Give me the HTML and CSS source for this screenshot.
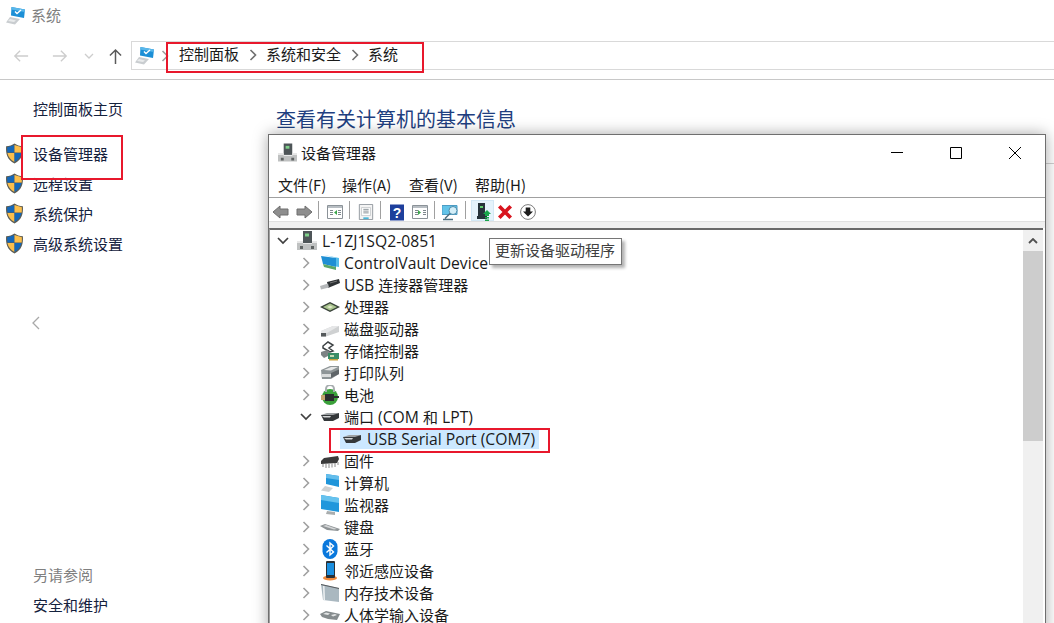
FILE: index.html
```html
<!DOCTYPE html>
<html lang="zh-CN">

<head>
    <meta charset="UTF-8">
    <title>系统</title>
    <link rel="stylesheet" href="styles.css">
</head>

<body>
    <svg class="defs" width="0" height="0">
        <defs>
            <symbol id="pc" viewBox="0 0 20 20">
                <path d="M5.500 1 19 3.500 18 12 5 9.500z" fill="#1c8fd6"/>
                <path d="M5.500 1 19 3.500 18.700 6 5.200 3.500z" fill="#59b7ea"/>
                <path d="M9 5.500 11 7.500 15 4" fill="none" stroke="#fff" stroke-width="1.400"/>
                <path d="M4 11 14 13 9 18.500 0 16.500z" fill="#c9cdd0"/>
                <path d="M4 13 10 14.500 8 16 2 15z" fill="#e9ebec"/>
            </symbol>
            <symbol id="shield" viewBox="0 0 18 20">
                <path d="M9 .5C7 2 4 3 1 3c-.5 7 1 13 8 16.500C16 16 17.500 10 17 3c-3 0-6-1-8-2.500z" fill="#5c5c52"/>
                <path d="M9 2 2 4c0 2 0 4 .3 5H9z" fill="#1467b8"/>
                <path d="M9 2v7h6.800c.3-1 .2-3 .2-5z" fill="#fbbf4c"/>
                <path d="M2.300 9.500H9V18C5 16 3 13 2.300 9.500z" fill="#fbbf4c"/>
                <path d="M9 9.500h6.700C15 13 13 16 9 18z" fill="#1467b8"/>
            </symbol>
            <symbol id="host" viewBox="0 0 20 20">
                <path d="M6 0h9v12H6z" fill="#4e5558"/>
                <path d="M8 2.500h4v3H8z" fill="#7fd08a"/>
                <path d="M0 10h6v3h9v-3h5v9H0z" fill="#bfc1c1"/>
                <path d="M0 10h6v3h9v-3h5v2H0z" fill="#e7e7e7"/>
                <path d="M3 15h3v3H3zM14 15h3v3h-3z" fill="#5f6363"/>
            </symbol>
            <symbol id="card" viewBox="0 0 20 20">
                <path d="M1 3 16 5v9L3 11z" fill="#1f8fd4"/>
                <path d="M4 2 19 5v9l-3-.500V5z" fill="#55bdea"/>
                <path d="M3 11 16 14v3L4 14z" fill="#5ba867"/>
            </symbol>
            <symbol id="usb" viewBox="0 0 20 20">
                <path d="M7 7 19 4l1 4-12 5z" fill="#2e3234"/>
                <path d="M0 11 8 8.500 9 12.500l-8 2z" fill="#b5b8ba"/>
                <path d="M10 8 17 6" stroke="#777" fill="none"/>
            </symbol>
            <symbol id="cpu" viewBox="0 0 20 20">
                <path d="M0 10 10 5l10 5-10 5z" fill="#39433a"/>
                <path d="M3 10 10 6.500 17 10l-7 3.500z" fill="#a9c48e"/>
                <path d="M7 10 10 8.500 13 10l-3 1.500z" fill="#dfe7c8"/>
            </symbol>
            <symbol id="disk" viewBox="0 0 20 20">
                <path d="M1 12 13 7h6v6L6 17.500H1z" fill="#cfd1d2"/>
                <path d="M1 14h5v3.500H1z" fill="#55595b"/>
                <path d="M1 12 13 7h6L7 14H1z" fill="#e6e7e8"/>
            </symbol>
            <symbol id="storage" viewBox="0 0 20 20">
                <path d="M3 5 8 1l5 3-4 3 4 3-3 1-7-4z" fill="none" stroke="#3d4244" stroke-width="1.500"/>
                <path d="M1 11 7 9l3 2v3l-6 3-3-3z" fill="#7d8385"/>
                <path d="M8 12h11v6H8z" fill="#3a8c66"/>
                <path d="M10 14h4v2h-4z" fill="#c7d8b2"/>
                <path d="M9 18h9v1.500H9z" fill="#c8a03c"/>
            </symbol>
            <symbol id="printer" viewBox="0 0 20 20">
                <path d="M1 7 10 3h9v8l-8 5H2z" fill="#8e9597"/>
                <path d="M4 7 11 4h7l-7 3.500z" fill="#e5e6e6"/>
                <path d="M2 11h9v3H2z" fill="#dadcdc"/>
                <path d="M11 10 19 6.500V11l-8 4z" fill="#5f6568"/>
            </symbol>
            <symbol id="battery" viewBox="0 0 20 20">
                <circle cx="10" cy="12" r="8" fill="#3aa03a"/>
                <path d="M5 4a5 5 0 0 1 10 0v3h-2V4a3 3 0 0 0-6 0v3H5z" fill="#a7adaf"/>
                <path d="M5 9h9v7H5z" fill="#2a2d2e"/>
                <path d="M1 10h4v5H1z" fill="#c5a36e"/>
                <path d="M14 11h5v2h-5z" fill="#2a2d2e"/>
            </symbol>
            <symbol id="port" viewBox="0 0 20 20">
                <path d="M1 8 7 6h12l-6 3H2z" fill="#9ea2a4"/>
                <path d="M1 8h12l6-2v5l-6 3H4z" fill="#34383a"/>
                <path d="M2 9h9l-1 1.500H4z" fill="#d6d8d9"/>
            </symbol>
            <symbol id="chip" viewBox="0 0 20 20">
                <path d="M1 10 4 7l14-2 1 3-2 4-16 1z" fill="#3b3b3b"/>
                <path d="M3 13v3M6 13v4M9 13v4M12 12.500v4M15 12v4M18 11v3" stroke="#8a8a8a" fill="none"/>
            </symbol>
            <symbol id="computer" viewBox="0 0 20 20">
                <path d="M6 1 19 3v11L6 11z" fill="#1f95da"/>
                <path d="M6 1 19 3v4L6 5z" fill="#63bdeb"/>
                <path d="M5 13 13 15l-4 4-8-1.500z" fill="#ced1d2"/>
            </symbol>
            <symbol id="monitor" viewBox="0 0 20 20">
                <path d="M1 0 19 3v14L1 14z" fill="#2097dc"/>
                <path d="M1 0 19 3v5L1 5z" fill="#66c2ee"/>
                <path d="M7 16 15 17v3l-9-1z" fill="#a9adae"/>
            </symbol>
            <symbol id="keyboard" viewBox="0 0 20 20">
                <path d="M0 9 5 7l15 5-2 2-11-1z" fill="#8f9496"/>
                <path d="M3 9 6 8l11 4-3 .500z" fill="#d4d6d7"/>
            </symbol>
            <symbol id="bluetooth" viewBox="0 0 20 20">
                <rect x="2.500" y="0" width="15" height="20" rx="7.500" fill="#0a78dc"/>
                <path d="M6.500 6.500 13.500 13 10 16V4l3.500 3-7 6.500" fill="none" stroke="#fff" stroke-width="1.400"/>
            </symbol>
            <symbol id="phone" viewBox="0 0 20 20">
                <ellipse cx="10" cy="17" rx="7" ry="2.500" fill="#f08a3c"/>
                <rect x="6" y="0" width="9" height="17" rx="1" fill="#2b3136"/>
                <rect x="7" y="2" width="7" height="12" fill="#1a8fe0"/>
            </symbol>
            <symbol id="memory" viewBox="0 0 20 20">
                <path d="M1 1 19 5v14L3 17z" fill="#aab8c0"/>
                <path d="M1 1 19 5v1L1 2z" fill="#55595b"/>
                <path d="M3 3h1.500l.500 14H3.500z" fill="#eef1f2"/>
            </symbol>
            <symbol id="hid" viewBox="0 0 20 20">
                <path d="M0 9 6 6l14 3-3 6-9-1-6-2z" fill="#858b8d"/>
                <path d="M3 9 6 7.500l4 1-2 1.500zM11 10l4-1 2 1-4 1.500z" fill="#e2e4e4"/>
            </symbol>
            <symbol id="chev" viewBox="0 0 10 14">
                <path d="M2.500 2 7.500 7 2.500 12" fill="none" stroke="currentColor" stroke-width="1.600"/>
            </symbol>
            <symbol id="chev-down" viewBox="0 0 14 10">
                <path d="M2 2 7 7 12 2" fill="none" stroke="#404040" stroke-width="1.700"/>
            </symbol>
            <symbol id="pane" viewBox="0 0 16 16">
                <path d="M.5 1.500h15v13H.5z" fill="#fff" stroke="#8b9298"/>
                <path d="M1 2h14v2H1z" fill="#b8bec3"/>
                <path d="M3 6h3v1H3zM3 8h3v1H3zM3 10h3v1H3zM11 6h3v1h-3zM11 8h3v1h-3zM11 10h3v1h-3z" fill="#7d868c"/>
            </symbol>
        </defs>
    </svg>

    <div class="title-row">
        <svg class="title-icon"><use href="#pc"/></svg>
        <span>系统</span>
    </div>

    <div class="nav-row">
        <svg class="nav-arrow" viewBox="0 0 18 14"><path d="M17 7H2M8 1 2 7l6 6" fill="none" stroke="#cdcdcd" stroke-width="1.500"/></svg>
        <svg class="nav-arrow nav-forward" viewBox="0 0 18 14"><path d="M1 7h15M10 1l6 6-6 6" fill="none" stroke="#cdcdcd" stroke-width="1.500"/></svg>
        <svg class="nav-drop" viewBox="0 0 10 6"><path d="M1 1 5 5 9 1" fill="none" stroke="#cdcdcd" stroke-width="1.300"/></svg>
        <svg class="nav-up" viewBox="0 0 14 18"><path d="M7 17V2M1 8l6-6 6 6" fill="none" stroke="#5a5a5a" stroke-width="1.600"/></svg>
        <div class="address">
            <svg class="address-icon"><use href="#pc"/></svg>
            <svg class="crumb-sep first"><use href="#chev"/></svg>
            <span>控制面板</span>
            <svg class="crumb-sep"><use href="#chev"/></svg>
            <span>系统和安全</span>
            <svg class="crumb-sep"><use href="#chev"/></svg>
            <span>系统</span>
        </div>
    </div>

    <div class="page">
        <div class="sidebar">
            <div class="side-home">控制面板主页</div>
            <div class="side-link"><svg class="shield"><use href="#shield"/></svg>设备管理器</div>
            <div class="side-link"><svg class="shield"><use href="#shield"/></svg>远程设置</div>
            <div class="side-link"><svg class="shield"><use href="#shield"/></svg>系统保护</div>
            <div class="side-link"><svg class="shield"><use href="#shield"/></svg>高级系统设置</div>
            <svg class="side-collapse" viewBox="0 0 8 14"><path d="M7 1 1 7l6 6" fill="none" stroke="#a8a8a8" stroke-width="1.300"/></svg>
            <div class="side-see">另请参阅</div>
            <div class="side-home">安全和维护</div>
        </div>
        <h1 class="heading">查看有关计算机的基本信息</h1>
    </div>

    <div class="page-edge"></div>

    <div class="window">
        <div class="win-title">
            <svg class="win-icon"><use href="#host"/></svg>
            <span class="win-name">设备管理器</span>
            <div class="win-controls">
                <div class="win-btn"><svg viewBox="0 0 12 12"><path d="M0 5.500h12" stroke="#000"/></svg></div>
                <div class="win-btn"><svg viewBox="0 0 12 12"><path d="M.5.500h11v11H.5z" fill="none" stroke="#000"/></svg></div>
                <div class="win-btn"><svg viewBox="0 0 12 12"><path d="M0 0 12 12M12 0 0 12" stroke="#000"/></svg></div>
            </div>
        </div>
        <div class="menu">
            <span>文件(F)</span>
            <span>操作(A)</span>
            <span>查看(V)</span>
            <span>帮助(H)</span>
        </div>
        <div class="toolbar">
            <div class="tool"><svg viewBox="0 0 16 14"><path d="M0 7 7 1v3h8v6H7v3z" fill="#8e8e8e" stroke="#6e6e6e"/></svg></div>
            <div class="tool"><svg viewBox="0 0 16 14"><path d="M16 7 9 1v3H1v6h8v3z" fill="#8e8e8e" stroke="#6e6e6e"/></svg></div>
            <div class="tool-sep"></div>
            <div class="tool"><svg viewBox="0 0 16 16"><use href="#pane"/><path d="M10 6 7 8.500l3 2.500z" fill="#3aa54a"/></svg></div>
            <div class="tool-sep"></div>
            <div class="tool"><svg viewBox="0 0 16 18"><path d="M.5.500h15v17H.5z" fill="#f4f4f4" stroke="#8b9298"/><path d="M3 4h10v9H3z" fill="#fff" stroke="#a8adb1" stroke-width=".6"/><path d="M5 6h6M5 8h6M5 10h6" stroke="#7d868c"/><path d="M5 15h6v2H5z" fill="#49b6d8"/></svg></div>
            <div class="tool-sep"></div>
            <div class="tool"><svg viewBox="0 0 14 16" class="tool-help"><path d="M0 0h14v16H0z" fill="#1e3f9c"/><text x="7" y="13" class="help-mark">?</text></svg></div>
            <div class="tool"><svg viewBox="0 0 16 16"><use href="#pane"/><path d="M6 6l3 2.500L6 11z" fill="#3aa54a"/></svg></div>
            <div class="tool-sep"></div>
            <div class="tool"><svg viewBox="0 0 18 16" class="tool-wide"><path d="M0 1h15v9H0z" fill="#62c3e8" stroke="#4c9cc4"/><circle cx="11" cy="6" r="4" fill="#d3eef8" stroke="#4c8cab"/><path d="M8 9 3 14M1 15h10" stroke="#4d6f80" stroke-width="1.500"/></svg></div>
            <div class="tool-sep"></div>
            <div class="tool tool-on"><svg viewBox="0 0 14 18" class="tool-tall"><path d="M1 0h7v13H1zM0 13h10v3H0z" fill="#26333a"/><path d="M3 3h3v2H3z" fill="#60cf70"/><path d="M10 7l4 4h-2v2H8v-2H6z" fill="#18a54a"/><path d="M8 14h4v1.500H8zM8 16.500h4V18H8z" fill="#18a54a"/></svg></div>
            <div class="tool"><svg viewBox="0 0 14 14"><path d="M2 2 12 12M12 2 2 12" stroke="#d8141e" stroke-width="3.200"/></svg></div>
            <div class="tool"><svg viewBox="0 0 16 16"><circle cx="8" cy="8" r="7.400" fill="#fff" stroke="#7c7c7c"/><path d="M5.700 3.500h4.600v4H13L8 12.500 3 7.500h2.700z" fill="#1c1c1c"/></svg></div>
        </div>
        <div class="band"></div>
        <div class="tree-wrap">
            <div class="tree">
                <div class="row root"><svg class="toggle-down"><use href="#chev-down"/></svg><svg class="row-icon"><use href="#host"/></svg><span class="lat">L-1ZJ1SQ2-0851</span></div>
                <div class="row"><svg class="toggle"><use href="#chev"/></svg><svg class="row-icon"><use href="#card"/></svg><span class="lat">ControlVault Device</span></div>
                <div class="row"><svg class="toggle"><use href="#chev"/></svg><svg class="row-icon"><use href="#usb"/></svg><span><span class="lat">USB </span>连接器管理器</span></div>
                <div class="row"><svg class="toggle"><use href="#chev"/></svg><svg class="row-icon"><use href="#cpu"/></svg><span class="cn">处理器</span></div>
                <div class="row"><svg class="toggle"><use href="#chev"/></svg><svg class="row-icon"><use href="#disk"/></svg><span class="cn">磁盘驱动器</span></div>
                <div class="row"><svg class="toggle"><use href="#chev"/></svg><svg class="row-icon"><use href="#storage"/></svg><span class="cn">存储控制器</span></div>
                <div class="row"><svg class="toggle"><use href="#chev"/></svg><svg class="row-icon"><use href="#printer"/></svg><span class="cn">打印队列</span></div>
                <div class="row"><svg class="toggle"><use href="#chev"/></svg><svg class="row-icon"><use href="#battery"/></svg><span class="cn">电池</span></div>
                <div class="row"><svg class="toggle-down"><use href="#chev-down"/></svg><svg class="row-icon"><use href="#port"/></svg><span>端口<span class="lat"> (COM </span>和<span class="lat"> LPT)</span></span></div>
                <div class="row child"><div class="selected"><svg class="row-icon"><use href="#port"/></svg><span class="lat">USB Serial Port (COM7)</span></div></div>
                <div class="row"><svg class="toggle"><use href="#chev"/></svg><svg class="row-icon"><use href="#chip"/></svg><span class="cn">固件</span></div>
                <div class="row"><svg class="toggle"><use href="#chev"/></svg><svg class="row-icon"><use href="#computer"/></svg><span class="cn">计算机</span></div>
                <div class="row"><svg class="toggle"><use href="#chev"/></svg><svg class="row-icon"><use href="#monitor"/></svg><span class="cn">监视器</span></div>
                <div class="row"><svg class="toggle"><use href="#chev"/></svg><svg class="row-icon"><use href="#keyboard"/></svg><span class="cn">键盘</span></div>
                <div class="row"><svg class="toggle"><use href="#chev"/></svg><svg class="row-icon"><use href="#bluetooth"/></svg><span class="cn">蓝牙</span></div>
                <div class="row"><svg class="toggle"><use href="#chev"/></svg><svg class="row-icon"><use href="#phone"/></svg><span class="cn">邻近感应设备</span></div>
                <div class="row"><svg class="toggle"><use href="#chev"/></svg><svg class="row-icon"><use href="#memory"/></svg><span class="cn">内存技术设备</span></div>
                <div class="row"><svg class="toggle"><use href="#chev"/></svg><svg class="row-icon"><use href="#hid"/></svg><span class="cn">人体学输入设备</span></div>
            </div>
            <div class="scrollbar">
                <div class="scroll-up"><svg viewBox="0 0 10 6"><path d="M1 5 5 1l4 4" fill="none" stroke="#505050" stroke-width="1.800"/></svg></div>
                <div class="scroll-thumb"></div>
            </div>
        </div>
    </div>

    <div class="tooltip">更新设备驱动程序</div>

    <div class="mark mark-crumbs"></div>
    <div class="mark mark-side"></div>
    <div class="mark mark-port"></div>
</body>

</html>
```

FILE: styles.css
```css
html, body {
    margin: 0;
    height: 623px;
    overflow: hidden;
}

body {
    position: relative;
    background-color: #fff;
    font-family: 'Noto Sans CJK SC', 'Open Sans', sans-serif;
    font-size: 15px;
    color: #1a1a1a;
}

.defs {
    position: absolute;
}

.title-row {
    display: flex;
    align-items: center;
    height: 32px;
    padding-left: 6px;
    color: #7f7f7f;
    font-size: 15px;
}

.title-row span {
    margin-bottom: 4px;
}

.title-icon {
    width: 20px;
    height: 20px;
    margin-right: 5px;
}

.nav-row {
    display: flex;
    align-items: flex-start;
    height: 48px;
    padding-top: 9px;
    box-sizing: border-box;
    border-bottom: 1px solid #c8c8c8;
}

.nav-arrow {
    width: 16px;
    height: 14px;
    margin: 8px 0 0 13px;
}

.nav-forward {
    margin-left: 23px;
}

.nav-drop {
    width: 10px;
    height: 6px;
    margin: 12px 0 0 16px;
}

.nav-up {
    width: 13px;
    height: 17px;
    margin: 7px 0 0 15px;
}

.address {
    display: flex;
    align-items: center;
    height: 27px;
    margin-left: 9px;
    padding-left: 3px;
    flex: 1;
    border: 1px solid #d9d9d9;
    border-right: none;
    color: #1a1a1a;
}

.address span {
    margin-bottom: 4px;
}

.address-icon {
    width: 20px;
    height: 20px;
    margin-right: 5px;
}

.crumb-sep {
    width: 10px;
    height: 14px;
    margin: 0 8.5px 2px;
    color: #707070;
}

.crumb-sep.first {
    margin: 0 9px 0 0;
    color: #a0a0a0;
}

.page {
    display: flex;
}

.sidebar {
    width: 276px;
    flex: none;
    color: #14213d;
    height: 540px;
}

.side-home {
    height: 30px;
    line-height: 30px;
    padding-left: 33px;
    margin-top: 14px;
}

.side-link {
    display: flex;
    align-items: center;
    height: 30px;
    padding-left: 5px;
}

.side-home + .side-link {
    margin-top: 14px;
}

.shield {
    width: 19px;
    height: 21px;
    margin-right: 9px;
}

.side-collapse {
    display: block;
    width: 8px;
    height: 14px;
    margin: 58px 0 0 32px;
}

.side-see {
    height: 30px;
    line-height: 30px;
    padding-left: 33px;
    margin-top: 230px;
    color: #808080;
}

.side-see + .side-home {
    margin-top: 0;
}

.heading {
    margin: 22px 0 0;
    font-size: 20px;
    font-weight: 400;
    line-height: 34px;
    color: #1f3f80;
}

.page-edge {
    position: absolute;
    left: 1046px;
    top: 163px;
    width: 8px;
    height: 1px;
    background-color: #d0d0d0;
}

.window {
    position: absolute;
    left: 268px;
    top: 134px;
    width: 778px;
    height: 500px;
    box-sizing: border-box;
    background-color: #fff;
    border: 1px solid #6f6f6f;
    box-shadow: 0 0 14px rgba(0, 0, 0, 0.35);
}

.win-title {
    display: flex;
    align-items: center;
    height: 36px;
}

.win-icon {
    width: 19px;
    height: 20px;
    margin: 0 4px 0 9px;
}

.win-name {
    margin-bottom: 2px;
}

.win-controls {
    display: flex;
    margin-left: auto;
    margin-right: 1px;
}

.win-btn {
    display: flex;
    align-items: center;
    justify-content: center;
    width: 59px;
    height: 36px;
}

.win-btn svg {
    width: 12px;
    height: 12px;
}

.menu {
    display: grid;
    grid-template-columns: 64px 67px 66px auto;
    align-items: center;
    height: 27px;
    padding: 0 0 0 9px;
    box-sizing: border-box;
    border-bottom: 1px solid #a0a0a0;
    color: #1a1a1a;
}

.toolbar {
    display: flex;
    align-items: flex-end;
    height: 23px;
    padding-left: 0.5px;
    border-bottom: 1px solid #e0e0e0;
}

.tool {
    display: flex;
    align-items: center;
    justify-content: center;
    width: 23px;
    height: 21px;
}

.tool svg {
    width: 16px;
    height: 16px;
    margin-top: 3px;
}

.tool .tool-help {
    width: 14px;
    height: 17px;
}

.tool .tool-wide {
    width: 18px;
    height: 17px;
}

.tool .tool-tall {
    width: 14px;
    height: 18px;
    margin-left: 3px;
}

.help-mark {
    font-family: 'Liberation Sans', sans-serif;
    font-size: 14px;
    font-weight: 700;
    fill: #fff;
    text-anchor: middle;
}

.tool-on {
    background-color: #e5f3fb;
    box-shadow: inset 0 0 0 1px #d3e8f5;
}

.tool-sep {
    width: 1px;
    height: 18px;
    margin: 0 4.5px 2px 2.5px;
    background-color: #a0a0a0;
}

.band {
    height: 6px;
    background-color: #f0f0f0;
}

.tree-wrap {
    display: flex;
    margin: 0 2px 0 0;
    border-top: 2px solid #696969;
    border-left: 1px solid #a0a0a0;
    height: 400px;
}

.tree {
    flex: 1;
    font-family: 'Noto Sans CJK SC', sans-serif;
    font-size: 15px;
    color: #1a1a1a;
}

.lat {
    font-family: 'Open Sans', sans-serif;
    font-size: 15.7px;
}

.cn {
    margin-bottom: 2px;
}

.row {
    display: flex;
    align-items: center;
    height: 22px;
    padding-left: 31px;
    white-space: nowrap;
}

.row.root {
    padding-left: 8px;
}

.row.child {
    padding-left: 70px;
}

.toggle {
    width: 10px;
    height: 14px;
    margin-right: 9px;
    color: #a0a0a0;
}

.toggle-down {
    width: 14px;
    height: 10px;
    margin: 0 7px 0 -2px;
}

.row-icon {
    width: 20px;
    height: 20px;
    margin-right: 4px;
    flex: none;
}

.root .row-icon {
    margin-right: 5px;
}

.selected {
    display: flex;
    align-items: center;
    height: 20px;
    padding: 0 4px 0 2px;
    background-color: #cce8ff;
}

.selected .row-icon {
    margin-right: 5px;
}

.scrollbar {
    width: 20px;
    flex: none;
    background-color: #f0f0f0;
}

.scroll-up {
    display: flex;
    align-items: center;
    justify-content: center;
    height: 21px;
}

.scroll-up svg {
    width: 10px;
    height: 6px;
}

.scroll-thumb {
    height: 190px;
    background-color: #cdcdcd;
}

.tooltip {
    position: absolute;
    left: 489px;
    top: 238px;
    height: 25px;
    line-height: 21px;
    padding: 0 6px 0 5px;
    background-color: #fff;
    border: 1px solid #767676;
    color: #404040;
    box-shadow: 3px 3px 3px rgba(0, 0, 0, 0.3);
}

.mark {
    position: absolute;
    box-sizing: border-box;
    border: 2px solid #e8182c;
}

.mark-crumbs {
    left: 166px;
    top: 42px;
    width: 258px;
    height: 31px;
}

.mark-side {
    left: 21px;
    top: 135px;
    width: 102px;
    height: 45px;
}

.mark-port {
    left: 329px;
    top: 428px;
    width: 221px;
    height: 25px;
}
```
